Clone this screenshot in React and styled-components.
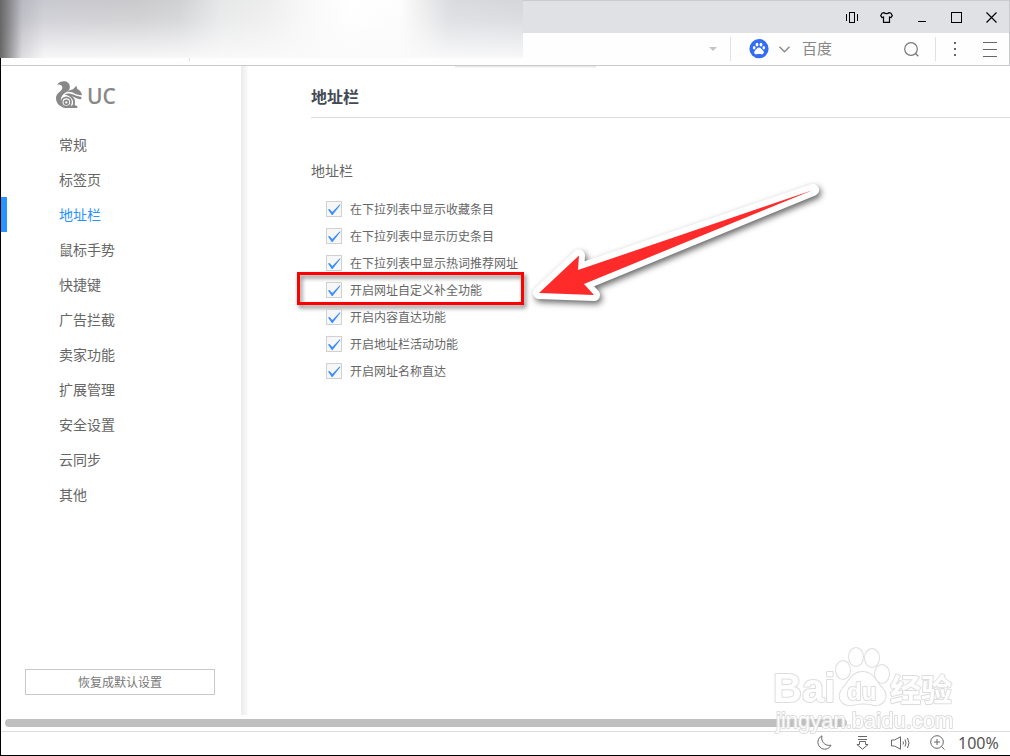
import React, { useState } from 'react';
import styled, { createGlobalStyle, css } from 'styled-components';

const GlobalStyle = createGlobalStyle`
    *, *::before, *::after {
        box-sizing: border-box;
    }
    body {
        margin: 0;
        background: #fff;
        font-family: "Noto Sans", "Noto Sans CJK SC", sans-serif;
        color: #666;
    }
    button, input {
        font: inherit;
        color: inherit;
    }
`;

const BrowserWindow = styled.div`
    position: relative;
    display: flex;
    flex-direction: column;
    min-height: 100vh;
    border-left: 1px solid #000;
    border-bottom: 1px solid #000;
`;

const TitleBar = styled.div`
    display: flex;
    justify-content: flex-end;
    height: 33px;
    background: #e0e1e5;
    border-top: 1px solid #c9cace;
    border-right: 1px solid #c9cace;
`;

const IconButton = styled.button`
    display: flex;
    align-items: center;
    justify-content: center;
    width: ${props => props.$width}px;
    padding: 0;
    border: 0;
    background: none;
    color: ${props => props.$color || '#666'};
    svg {
        display: block;
        fill: none;
        stroke: currentColor;
    }
`;

const Toolbar = styled.div`
    display: flex;
    align-items: center;
    height: 33px;
    background: #fefefe;
    border-bottom: 1px solid #c9cace;
    border-right: 1px solid #c9cace;
`;

const ToolbarPart = styled.div`
    display: flex;
    align-items: center;
    height: 24px;
    ${props => props.$grow && css`flex: 1;`}
    ${props => props.$width && css`width: ${props.$width}px;`}
    ${props => props.$indent && css`padding-left: ${props.$indent}px;`}
    ${props => props.$divided && css`border-right: 1px solid #dfe0e6;`}
`;

const AddressInput = styled.input`
    flex: 1;
    min-width: 0;
    height: 24px;
    border: 0;
    outline: 0;
    background: none;
`;

const EngineInput = styled.input`
    flex: 1;
    min-width: 0;
    height: 24px;
    padding: 0 0 2px 12px;
    border: 0;
    outline: 0;
    background: none;
    font-size: 15px;
    &::placeholder {
        color: #888;
        opacity: 1;
    }
`;

const PrivacyBlur = styled.div`
    position: absolute;
    top: 0;
    left: -1px;
    width: 523px;
    height: 58px;
    background:
        linear-gradient(to right, #666 0, rgba(110, 110, 112, 0.75) 8px, rgba(160, 160, 165, 0.3) 22px, rgba(200, 200, 205, 0) 44px),
        linear-gradient(to bottom, rgba(250, 250, 251, 0) 0, rgba(250, 250, 251, 0.2) 35%, rgba(250, 250, 251, 0.95) 100%),
        linear-gradient(to right, #bfbfcb 0, #c8c8d0 40px, #cacacc 140px, #d0d1d3 180px, #e6e7e8 220px, #ededed 265px, #f8f8f8 305px, #fff 350px, #fdfdfd 400px, #ececed 425px, #d9dbde 450px, #d4d6da 523px);
`;

const Body = styled.div`
    display: flex;
    flex: 1;
`;

const Sidebar = styled.aside`
    display: flex;
    flex-direction: column;
    width: 240px;
`;

const Logo = styled.div`
    display: flex;
    align-items: center;
    gap: 4px;
    height: 61px;
    padding: 0 0 4px 55px;
`;

const LogoName = styled.span`
    padding-top: 2px;
    color: #888;
    font-family: "Open Sans", sans-serif;
    font-size: 21px;
    font-weight: 600;
    line-height: 24px;
`;

const Menu = styled.nav`
    display: flex;
    flex-direction: column;
`;

const MenuLink = styled.a`
    height: 35px;
    padding-left: 52px;
    border-left: 6px solid transparent;
    color: #666;
    font-size: 14px;
    line-height: 35px;
    text-decoration: none;
    ${props => props.$active && css`
        border-color: #2a92ff;
        color: #2a92ff;
    `}
`;

const ResetButton = styled.button`
    height: 26px;
    margin: auto 26px 20px 24px;
    padding: 2px 0 0;
    border: 1px solid #c8c8c8;
    background: #fff;
    color: #777;
    font-size: 12px;
    line-height: 22px;
`;

const Main = styled.main`
    position: relative;
    flex: 1;
    padding-left: 70px;
    background:
        linear-gradient(#e4e4e4, #fafafa) 214px 0 / 141px 2px no-repeat,
        linear-gradient(to right, #ececec, #f3f3f3 4px, #fff 8px);
`;

const PageTitle = styled.h1`
    margin: 0;
    padding: 19px 0 8px;
    border-bottom: 1px solid #dedede;
    color: #434a54;
    font-size: 16px;
    font-weight: 700;
    line-height: 24px;
`;

const Group = styled.fieldset`
    margin: 43px 0 0;
    padding: 0;
    border: 0;
`;

const GroupTitle = styled.legend`
    padding: 0;
    font-size: 14px;
    line-height: 20px;
`;

const OptionList = styled.div`
    display: flex;
    flex-direction: column;
    align-items: flex-start;
    gap: 9px;
    padding: 20px 0 0 15px;
`;

const Option = styled.label`
    position: relative;
    display: flex;
    align-items: flex-start;
    gap: 8px;
    font-size: 12px;
    line-height: 18px;
    ${props => props.$marked && css`
        &::after {
            content: "";
            position: absolute;
            top: -10px;
            left: -29px;
            width: 227px;
            height: 33px;
            border: 3px solid #f00;
            filter: drop-shadow(2px 3px 2px rgba(0, 0, 0, 0.5));
            pointer-events: none;
        }
    `}
`;

const Checkbox = styled.input`
    appearance: none;
    width: 16px;
    height: 16px;
    margin: 0;
    border: 1px solid #cfd1d3;
    background: #f7f7f8;
    &:checked::before {
        content: "";
        display: block;
        width: 14px;
        height: 14px;
        background: #3d8ffc;
        clip-path: polygon(7% 54%, 18% 50%, 38% 72%, 90% 18%, 97% 20%, 40% 93%, 34% 93%);
    }
`;

const Pointer = styled.svg`
    position: absolute;
    top: 110px;
    left: 280px;
    width: 310px;
    height: 140px;
    overflow: visible;
    filter: drop-shadow(2px 3px 3px rgba(0, 0, 0, 0.6));
    pointer-events: none;
`;

const ScrollTrack = styled.div`
    height: 16px;
    padding: 4px 163px 4px 4px;
`;

const ScrollThumb = styled.div`
    height: 8px;
    border-radius: 4px;
    background: #bfbfbf;
`;

const StatusBar = styled.footer`
    display: flex;
    align-items: center;
    justify-content: flex-end;
    height: 24px;
    padding: 0 12px 2px 0;
    border-top: 1px solid #dedede;
`;

const ZoomLevel = styled.span`
    width: 40px;
    margin-left: 3px;
    color: #555;
    font-size: 16px;
    line-height: 22px;
    white-space: nowrap;
`;

const Watermark = styled.svg`
    position: absolute;
    right: 50px;
    bottom: 16px;
    width: 190px;
    height: 92px;
    fill: #fff;
    stroke: #dadada;
    stroke-width: 2px;
    stroke-linejoin: round;
    paint-order: stroke;
    opacity: 0.9;
    pointer-events: none;
    text {
        font-family: "Liberation Sans", "Noto Sans CJK SC", sans-serif;
    }
`;

const menu = ['常规', '标签页', '地址栏', '鼠标手势', '快捷键', '广告拦截', '卖家功能', '扩展管理', '安全设置', '云同步', '其他'];

const options = [
    '在下拉列表中显示收藏条目',
    '在下拉列表中显示历史条目',
    '在下拉列表中显示热词推荐网址',
    '开启网址自定义补全功能',
    '开启内容直达功能',
    '开启地址栏活动功能',
    '开启网址名称直达',
];

function Squirrel(){
    return (
        <svg width="27" height="27" viewBox="0 0 81 81" fill="#888">
            <path d="M3 11C10 1 20 0 27 1C38 3 44 13 41 23C38 32 27 33 20 42C11 53 14 67 23 79C8 76 0 64 0 51C0 36 17 32 19 21C20 14 13 9 3 11Z"/>
            <path d="M61 14L64 24C71 27 78 34 78 43C67 43 59 39 48 34C40 31 36 32 32 34C37 28 45 27 51 25Z"/>
            <path d="M25 41C42 31 50 43 77 48L75 55C62 54 57 48 46 45C56 50 59 60 56 72L64 76V81H42C51 74 55 65 48 54C43 46 34 41 25 41Z"/>
            <circle cx="31" cy="63" r="14" fill="none" stroke="#888" strokeWidth="5"/>
            <circle cx="31" cy="64" r="6" fill="none" stroke="#888" strokeWidth="5"/>
            <path d="M18 81C23 77 38 77 47 72L46 81Z"/>
        </svg>
    );
}

function BaiduBadge(){
    return (
        <svg width="20" height="20" viewBox="0 0 20 20" aria-hidden="true">
            <g fill="#fff" stroke="none">
                <circle cx="10" cy="9.7" r="9.6" fill="#336df4"/>
                <ellipse cx="8" cy="5.6" rx="1.4" ry="1.9"/>
                <ellipse cx="12" cy="5.6" rx="1.4" ry="1.9"/>
                <ellipse cx="5.2" cy="8.8" rx="1.3" ry="1.7"/>
                <ellipse cx="14.8" cy="8.8" rx="1.3" ry="1.7"/>
                <path d="M10 8.4C12 8.4 12.6 10.4 13.9 11.4C15.8 13 14.6 15.6 12.4 15.3C10.8 15 9.2 15 7.6 15.3C5.4 15.6 4.2 13 6.1 11.4C7.4 10.4 8 8.4 10 8.4Z"/>
            </g>
        </svg>
    );
}

function WindowButtons(){
    return (
        <>
            <IconButton $width={35} $color="#000" aria-label="分屏">
                <svg width="13" height="11" viewBox="0 0 13 11" shapeRendering="crispEdges">
                    <path d="M4.5 .5H9.5V10.5H4.5ZM1.5 2V9M12.5 2V9"/>
                </svg>
            </IconButton>
            <IconButton $width={35} $color="#000" aria-label="皮肤">
                <svg width="13" height="11" viewBox="0 0 13 11">
                    <path d="M4 .6C5 2 8 2 9 .6L11 1.2L12.3 3.6L11 5.5L9.5 5V10.4H3.5V5L2 5.5L.7 3.6L2 1.2Z" strokeWidth="1.2"/>
                </svg>
            </IconButton>
            <IconButton $width={35} $color="#000" aria-label="最小化">
                <svg width="10" height="11" viewBox="0 0 10 11" shapeRendering="crispEdges">
                    <path d="M1 9.5H9"/>
                </svg>
            </IconButton>
            <IconButton $width={35} $color="#000" aria-label="最大化">
                <svg width="11" height="11" viewBox="0 0 11 11" shapeRendering="crispEdges">
                    <path d="M.5 .5H10.5V10.5H.5Z"/>
                </svg>
            </IconButton>
            <IconButton $width={35} $color="#000" aria-label="关闭">
                <svg width="11" height="11" viewBox="0 0 11 11">
                    <path d="M.5 .5L10.5 10.5M10.5 .5L.5 10.5" strokeWidth="1.2"/>
                </svg>
            </IconButton>
        </>
    );
}

function NavToolbar(){
    return (
        <Toolbar>
            <ToolbarPart $width={189} $divided />
            <ToolbarPart $grow $divided>
                <AddressInput aria-label="地址" />
                <IconButton $width={35} $color="#c3c5cc" aria-label="展开地址">
                    <svg width="8" height="4" viewBox="0 0 8 4">
                        <path d="M0 0H8L4 4Z" fill="currentColor" stroke="none"/>
                    </svg>
                </IconButton>
            </ToolbarPart>
            <ToolbarPart $width={205} $indent={8} $divided>
                <IconButton $width={40} aria-label="百度搜索">
                    <BaiduBadge />
                </IconButton>
                <svg width="11" height="7" viewBox="0 0 11 7" fill="none" stroke="#888">
                    <path d="M.5 .8L5.5 5.8L10.5 .8" strokeWidth="1.3"/>
                </svg>
                <EngineInput aria-label="搜索" placeholder="百度" />
                <IconButton $width={48} $color="#777" aria-label="搜索">
                    <svg width="15" height="15" viewBox="0 0 15 15">
                        <circle cx="7" cy="7" r="6.3" strokeWidth="1.2"/>
                        <path d="M11.5 11.5L14.3 14.3" strokeWidth="1.3"/>
                    </svg>
                </IconButton>
            </ToolbarPart>
            <IconButton $width={38} aria-label="更多">
                <svg width="2" height="14" viewBox="0 0 2 14" shapeRendering="crispEdges">
                    <path d="M1 0V2M1 6V8M1 12V14" strokeWidth="2"/>
                </svg>
            </IconButton>
            <IconButton $width={35} aria-label="菜单">
                <svg width="18" height="15" viewBox="0 0 18 15" shapeRendering="crispEdges">
                    <path d="M0 .5H14M0 7.5H14M0 14.5H14"/>
                </svg>
            </IconButton>
        </Toolbar>
    );
}

function OptionRow({text, marked}){
    const [checked, setChecked] = useState(true);
    return (
        <Option $marked={marked}>
            <Checkbox type="checkbox" checked={checked} onChange={() => setChecked(!checked)} />
            {text}
        </Option>
    );
}

function Status(){
    return (
        <StatusBar>
            <IconButton $width={38} aria-label="夜间模式">
                <svg width="15" height="15" viewBox="0 0 15 15">
                    <path d="M5 .8C3.5 6.5 8 11.5 14 10.2C12 14.5 6.5 15.6 3 12.2C-.6 8.5 .6 3 5 .8Z" strokeLinejoin="round"/>
                </svg>
            </IconButton>
            <IconButton $width={38} aria-label="下载">
                <svg width="13" height="14" viewBox="0 0 13 14">
                    <path d="M2 .5H11M2 3.5H11M3.5 6V8.5H.9L6.5 13.2L12.1 8.5H9.5V5.5H3.5Z"/>
                </svg>
            </IconButton>
            <IconButton $width={38} aria-label="声音">
                <svg width="19" height="14" viewBox="0 0 19 14">
                    <path d="M.5 4H3.5L9.5 .8V13.2L3.5 10H.5ZM12 5.5Q13 7 12 8.5M14 3.5Q16 7 14 10.5M16.5 2Q19.5 7 16.5 12"/>
                </svg>
            </IconButton>
            <IconButton $width={36} aria-label="缩放">
                <svg width="15" height="15" viewBox="0 0 15 15">
                    <circle cx="7" cy="7" r="6.3"/>
                    <path d="M11.5 11.5L14.5 14.5M4 7H10M7 4V10"/>
                </svg>
            </IconButton>
            <ZoomLevel>100%</ZoomLevel>
        </StatusBar>
    );
}

export default function App(){
    const [current, setCurrent] = useState('地址栏');
    return (
        <BrowserWindow>
            <GlobalStyle />
            <TitleBar>
                <WindowButtons />
            </TitleBar>
            <NavToolbar />
            <PrivacyBlur />
            <Body>
                <Sidebar>
                    <Logo>
                        <Squirrel />
                        <LogoName>UC</LogoName>
                    </Logo>
                    <Menu>
                        {menu.map(item => (
                            <MenuLink
                                key={item}
                                href="#"
                                $active={item === current}
                                onClick={() => setCurrent(item)}>
                                {item}
                            </MenuLink>
                        ))}
                    </Menu>
                    <ResetButton>恢复成默认设置</ResetButton>
                </Sidebar>
                <Main>
                    <PageTitle>地址栏</PageTitle>
                    <Group>
                        <GroupTitle>地址栏</GroupTitle>
                        <OptionList>
                            {options.map((text, index) => (
                                <OptionRow key={text} text={text} marked={index === 3} />
                            ))}
                        </OptionList>
                    </Group>
                    <Pointer viewBox="0 0 310 140">
                        <path
                            d="M18 117L58 79.5L57 94L292 14L63 108L73 119Z"
                            fill="#fff"
                            stroke="#fff"
                            strokeWidth="12"
                            strokeLinejoin="round"/>
                        <path d="M18 117L58 79.5L57 94L292 14L63 108L73 119Z" fill="#ff2a2a"/>
                    </Pointer>
                </Main>
            </Body>
            <ScrollTrack>
                <ScrollThumb />
            </ScrollTrack>
            <Status />
            {/* site mark over the lower right corner */}
            <Watermark viewBox="0 0 190 92">
                <text x="3" y="55" fontSize="40" fontWeight="700">Bai</text>
                <ellipse cx="86" cy="10" rx="7" ry="9"/>
                <ellipse cx="102" cy="11" rx="7" ry="9"/>
                <ellipse cx="73" cy="23" rx="7" ry="9"/>
                <ellipse cx="112" cy="27" rx="7" ry="9"/>
                <path d="M92 25C104 25 106 35 112 41C120 50 113 59 104 58C96 56 89 56 82 58C71 59 66 50 73 41C79 35 82 25 92 25Z"/>
                <text x="77" y="53" fontSize="24" fontWeight="700">du</text>
                <text x="120" y="54" fontSize="31" fontWeight="700">经验</text>
                <text x="6" y="81" fontSize="22">jingyan.baidu.com</text>
            </Watermark>
        </BrowserWindow>
    );
}
